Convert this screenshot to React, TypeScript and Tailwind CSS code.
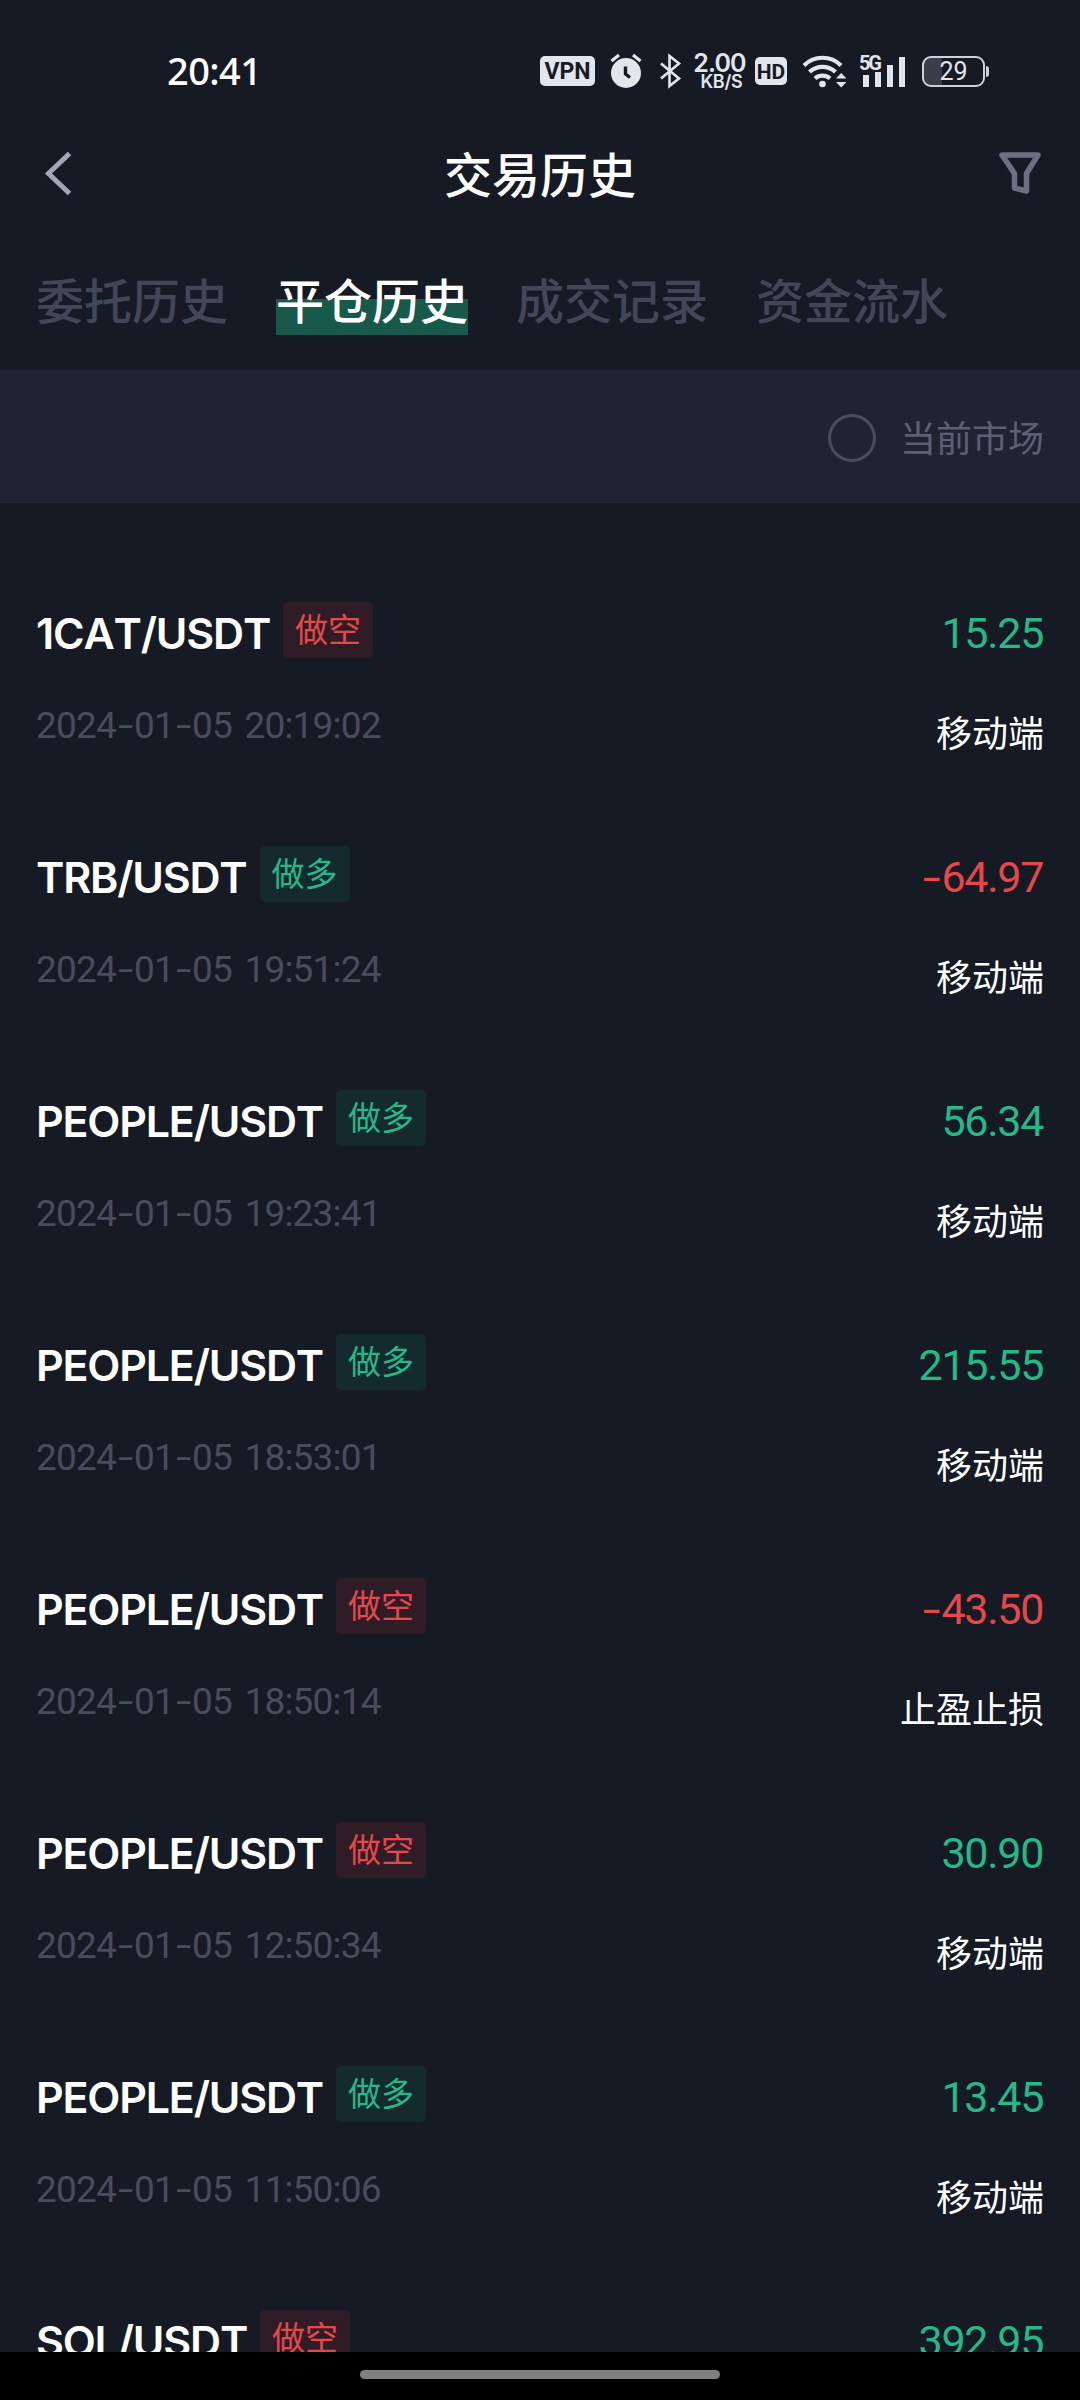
import { useState } from 'react'
import clsx from 'clsx'

type Trade = {
  pair: string
  side: 'long' | 'short'
  time: string
  pnl: string
  source: string
}

const tabs = ['委托历史', '平仓历史', '成交记录', '资金流水']

const trades: Trade[] = [
  { pair: '1CAT/USDT', side: 'short', time: '2024-01-05 20:19:02', pnl: '15.25', source: '移动端' },
  { pair: 'TRB/USDT', side: 'long', time: '2024-01-05 19:51:24', pnl: '-64.97', source: '移动端' },
  { pair: 'PEOPLE/USDT', side: 'long', time: '2024-01-05 19:23:41', pnl: '56.34', source: '移动端' },
  { pair: 'PEOPLE/USDT', side: 'long', time: '2024-01-05 18:53:01', pnl: '215.55', source: '移动端' },
  { pair: 'PEOPLE/USDT', side: 'short', time: '2024-01-05 18:50:14', pnl: '-43.50', source: '止盈止损' },
  { pair: 'PEOPLE/USDT', side: 'short', time: '2024-01-05 12:50:34', pnl: '30.90', source: '移动端' },
  { pair: 'PEOPLE/USDT', side: 'long', time: '2024-01-05 11:50:06', pnl: '13.45', source: '移动端' },
  { pair: 'SOL/USDT', side: 'short', time: '', pnl: '392.95', source: '' },
]

function StatusBar() {
  return (
    <div className="flex h-[142px] shrink-0 items-center pl-[167px] text-[#e3e5ec]">
      <span className="w-[373px] pb-[2px] font-['Noto_Sans'] text-[38px] leading-none font-medium tracking-[-0.6px] text-white">
        20:41
      </span>

      <span className="flex h-[30px] w-[55px] items-center justify-center rounded-[5px] bg-[#e3e5ec] pt-px font-['Roboto'] text-[23px] leading-[28px] font-bold text-[#161a25]">
        VPN
      </span>

      {/* Alarm */}
      <svg className="ml-[15px] h-[36px] w-[32px]" viewBox="0 0 32 36" fill="none">
        <circle cx="16" cy="20" r="15" fill="#e3e5ec" />
        <path d="M1.5 8 9 2M30.500 8 23 2" stroke="#e3e5ec" strokeWidth="3.200" />
        <path d="M15.500 13.500v7.500l4.500 3.500" stroke="#161a25" strokeWidth="3.400" />
      </svg>

      {/* Bluetooth */}
      <svg className="ml-[18px] h-[36px] w-[22px]" viewBox="0 0 22 36" fill="none">
        <path
          d="M1 10.500 19 25.500 9.500 33V3L19 10.500 1 25.500"
          stroke="#e3e5ec"
          strokeWidth="2.600"
          strokeLinejoin="miter"
        />
      </svg>

      <div className="ml-[11px] flex w-[53px] flex-col items-center font-['Inter'] font-semibold">
        <span className="text-[25px] leading-[20px] tracking-[-0.8px]">2.00</span>
        <span className="pl-1 text-[18px] leading-[17px] tracking-[-0.2px]">KB/S</span>
      </div>

      <span className="ml-[9px] flex h-[28px] w-[32px] items-center justify-center rounded-[5px] bg-[#e3e5ec] pt-px font-['Roboto'] text-[21px] leading-[26px] font-bold text-[#161a25]">
        HD
      </span>

      {/* Wi-Fi */}
      <svg className="ml-[15px] h-[36px] w-[46px]" viewBox="0 0 46 36" fill="none">
        <path d="M2 12.500a26 26 0 0 1 37 0" stroke="#e3e5ec" strokeWidth="4.200" />
        <path d="M7.500 19a19 19 0 0 1 26 0" stroke="#e3e5ec" strokeWidth="4.200" />
        <path d="M13 25.500a11.500 11.500 0 0 1 15 0" stroke="#e3e5ec" strokeWidth="4.200" />
        <circle cx="20.500" cy="31" r="3.300" fill="#e3e5ec" />
        <path d="M34 25.500h10.500L39.200 20zM34 29h10.500l-5.300 5.500z" fill="#e3e5ec" />
      </svg>

      {/* Signal */}
      <svg className="ml-[11px] h-[36px] w-[49px]" viewBox="0 0 49 36">
        <text x="0" y="17" fontFamily="Roboto" fontWeight="700" fontSize="20" textLength="23" fill="#e3e5ec">
          5G
        </text>
        <path d="M4 22h6v12h-6zM16 19h6v15h-6zM28 12h6v22h-6zM40 4h6v30h-6z" fill="#e3e5ec" />
      </svg>

      {/* Battery */}
      <div className="ml-[14px] flex h-[31px] w-[63px] items-center justify-center rounded-[9px] border-[2.500px] border-[#cfd1da] bg-linear-to-r from-[#3b3d49] from-30% to-transparent to-30% pt-px font-['Roboto'] text-[25px] leading-[26px]">
        29
      </div>
      <span className="ml-px h-[11px] w-[3px] rounded-r-sm bg-[#cfd1da]" />
    </div>
  )
}

function Header() {
  return (
    <header className="flex h-[64px] shrink-0 items-center justify-between px-[36px]">
      <svg className="h-[48px] w-[46px]" viewBox="0 0 46 48" fill="none">
        <path d="M33.500 3.500 12.500 23.500 33.500 43.500" stroke="#a2a6b6" strokeWidth="5" />
      </svg>
      <h1 className="pb-[4px] text-[48px] leading-[60px] font-medium text-white">交易历史</h1>
      <svg className="h-[48px] w-[46px]" viewBox="0 0 46 48" fill="none">
        <path
          d="M4 5h36L28.500 23.500V41L16.500 38V23.500z"
          stroke="#6a7183"
          strokeWidth="5.500"
          strokeLinejoin="round"
        />
      </svg>
    </header>
  )
}

function Digits({ text, dashClass }: { text: string; dashClass: string }) {
  return (
    <>
      {text.split('').map((char, i) => (
        <span key={i} className={char === '-' ? dashClass : undefined}>
          {char}
        </span>
      ))}
    </>
  )
}

function TradeRow({ trade }: { trade: Trade }) {
  return (
    <li className="flex h-[244px] shrink-0 justify-between">
      <div>
        <div className="flex h-[57px] items-center">
          <span className="pt-[5px] font-['Inter'] text-[43px] leading-[52px] font-semibold tracking-[-1.200px] text-white [font-kerning:none]">
            {trade.pair}
          </span>
          <span
            className={clsx(
              'mb-px ml-[13px] flex h-[56px] w-[90px] justify-center rounded-[5px] text-[33px] leading-[53px]',
              trade.side === 'long' ? 'bg-[#152a2f] text-[#27b888]' : 'bg-[#2f1c27] text-[#e5484b]'
            )}
          >
            {trade.side === 'long' ? '做多' : '做空'}
          </span>
        </div>
        <p className="mt-[45px] font-['Roboto'] text-[37px] leading-[44px] tracking-[-0.800px] [word-spacing:4px] whitespace-pre text-[#494c5b]">
          <Digits text={trade.time} dashClass="inline-block w-[18px] scale-x-150 text-center" />
        </p>
      </div>
      <div className="flex flex-col items-end">
        <p
          className={clsx(
            "flex h-[57px] items-center pt-[5px] pr-px font-['Roboto'] text-[43px] leading-[52px] tracking-[-1.300px]",
            trade.pnl.startsWith('-') ? 'text-[#e5484b]' : 'text-[#27b888]'
          )}
        >
          <Digits text={trade.pnl} dashClass="inline-block w-[20px] scale-x-150 text-center" />
        </p>
        <p className="mt-[46px] text-[36px] leading-[53px] text-white">{trade.source}</p>
      </div>
    </li>
  )
}

export default function App() {
  const [activeTab, setActiveTab] = useState('平仓历史')
  const [currentOnly, setCurrentOnly] = useState(false)

  return (
    <div className="flex h-[2400px] w-[1080px] flex-col overflow-hidden bg-[#161a25] font-['Noto_Sans_CJK_SC',sans-serif]">
      <StatusBar />
      <Header />

      {/* Tabs */}
      <nav className="flex h-[164px] shrink-0 items-end gap-[48px] px-[36px] pb-[35px]">
        {tabs.map(tab => (
          <button
            key={tab}
            onClick={() => setActiveTab(tab)}
            className={clsx(
              'h-[72px] pb-[2px] text-[48px] leading-[70px] font-medium',
              tab === activeTab
                ? 'bg-linear-to-b from-transparent from-50% to-[#17594a] to-50% text-white'
                : 'text-[#424757]'
            )}
          >
            {tab}
          </button>
        ))}
      </nav>

      {/* Market filter */}
      <div className="flex h-[133px] shrink-0 items-center justify-end bg-[#1f2432] pt-[3px] pr-[36px]">
        <button onClick={() => setCurrentOnly(!currentOnly)} className="flex items-center gap-[24px]">
          <span
            className={clsx('size-[48px] rounded-full border-[3px] border-[#474d5d]', currentOnly && 'bg-[#27b888]')}
          />
          <span className="pb-[4px] text-[36px] leading-[53px] text-[#5c6172]">当前市场</span>
        </button>
      </div>

      {/* Closed positions */}
      <ul className="flex min-h-0 flex-1 flex-col overflow-hidden px-[36px] pt-[99px]">
        {trades.map(trade => (
          <TradeRow key={trade.pair + trade.time} trade={trade} />
        ))}
      </ul>

      {/* Gesture bar */}
      <div className="flex h-[48px] shrink-0 justify-center bg-black pt-[18px]">
        <div className="h-[9px] w-[360px] rounded-full bg-[#808080]" />
      </div>
    </div>
  )
}
